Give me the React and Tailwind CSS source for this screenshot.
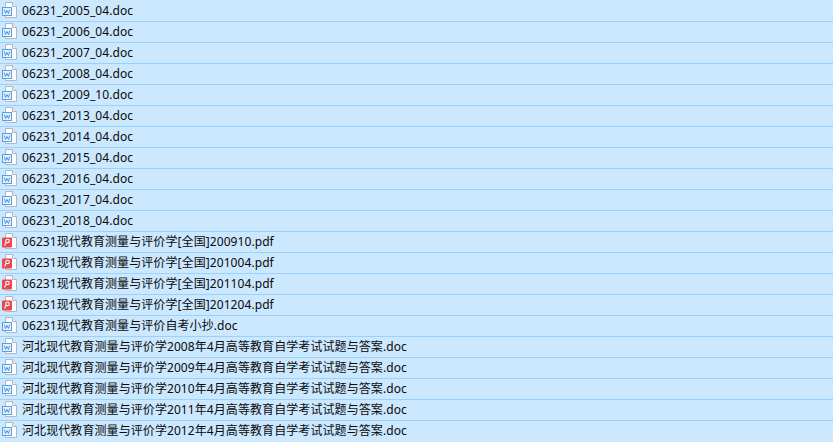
import React from "react";

const files = [
  "06231_2005_04.doc",
  "06231_2006_04.doc",
  "06231_2007_04.doc",
  "06231_2008_04.doc",
  "06231_2009_10.doc",
  "06231_2013_04.doc",
  "06231_2014_04.doc",
  "06231_2015_04.doc",
  "06231_2016_04.doc",
  "06231_2017_04.doc",
  "06231_2018_04.doc",
  "06231现代教育测量与评价学[全国]200910.pdf",
  "06231现代教育测量与评价学[全国]201004.pdf",
  "06231现代教育测量与评价学[全国]201104.pdf",
  "06231现代教育测量与评价学[全国]201204.pdf",
  "06231现代教育测量与评价自考小抄.doc",
  "河北现代教育测量与评价学2008年4月高等教育自学考试试题与答案.doc",
  "河北现代教育测量与评价学2009年4月高等教育自学考试试题与答案.doc",
  "河北现代教育测量与评价学2010年4月高等教育自学考试试题与答案.doc",
  "河北现代教育测量与评价学2011年4月高等教育自学考试试题与答案.doc",
  "河北现代教育测量与评价学2012年4月高等教育自学考试试题与答案.doc",
];

// small page icon with a W badge
const DocIcon = () => (
  <svg width="16" height="16" viewBox="0 0 16 16" className="shrink-0">
    <path d="M3.5 0.5H10.5L14.5 4.5V15.5H3.5Z" fill="#fbfdff" stroke="#aeb8c6" />
    <path d="M10.5 0.5V4.5H14.5" fill="#e8edf3" stroke="#aeb8c6" />
    <rect x="0.5" y="5.5" width="9" height="8" fill="#e6f1fd" stroke="#5a9ee6" />
    <path d="M2.3 7.5L3.5 11.5L5 8.5L6.5 11.5L7.7 7.5" fill="none" stroke="#3f8ade" strokeWidth="0.9" />
  </svg>
);

// same page with the red pdf badge
const PdfIcon = () => (
  <svg width="16" height="16" viewBox="0 0 16 16" className="shrink-0">
    <path d="M3.5 0.5H10.5L14.5 4.5V15.5H3.5Z" fill="#fbfdff" stroke="#aeb8c6" />
    <path d="M10.5 0.5V4.5H14.5" fill="#e8edf3" stroke="#aeb8c6" />
    <rect x="0" y="4.5" width="10" height="10" rx="1" fill="#e9484e" />
    <circle cx="5.5" cy="8" r="1.8" fill="none" stroke="#fff" strokeWidth="1.1" />
    <path d="M4 9.5L2.5 12.5M4.5 9.5H7" fill="none" stroke="#fff" strokeWidth="1.1" />
  </svg>
);

const App = () => {
  return (
    <div className="w-[833px] h-[442px] overflow-hidden bg-[#cce8ff] font-['Noto_Sans','Noto_Sans_CJK_SC',sans-serif] text-[12px] tracking-[0.08px] text-[#0a0a0a]">
      {files.map((name) => (
        <div
          key={name}
          className="flex h-[21px] items-center gap-[4px] pl-[2px] pb-[2px] border-t border-[#99d1ff] first:border-t-transparent"
        >
          {name.endsWith(".pdf") ? <PdfIcon /> : <DocIcon />}
          <span className="mt-[2px] whitespace-nowrap leading-none">{name}</span>
        </div>
      ))}
    </div>
  );
};

export default App;
